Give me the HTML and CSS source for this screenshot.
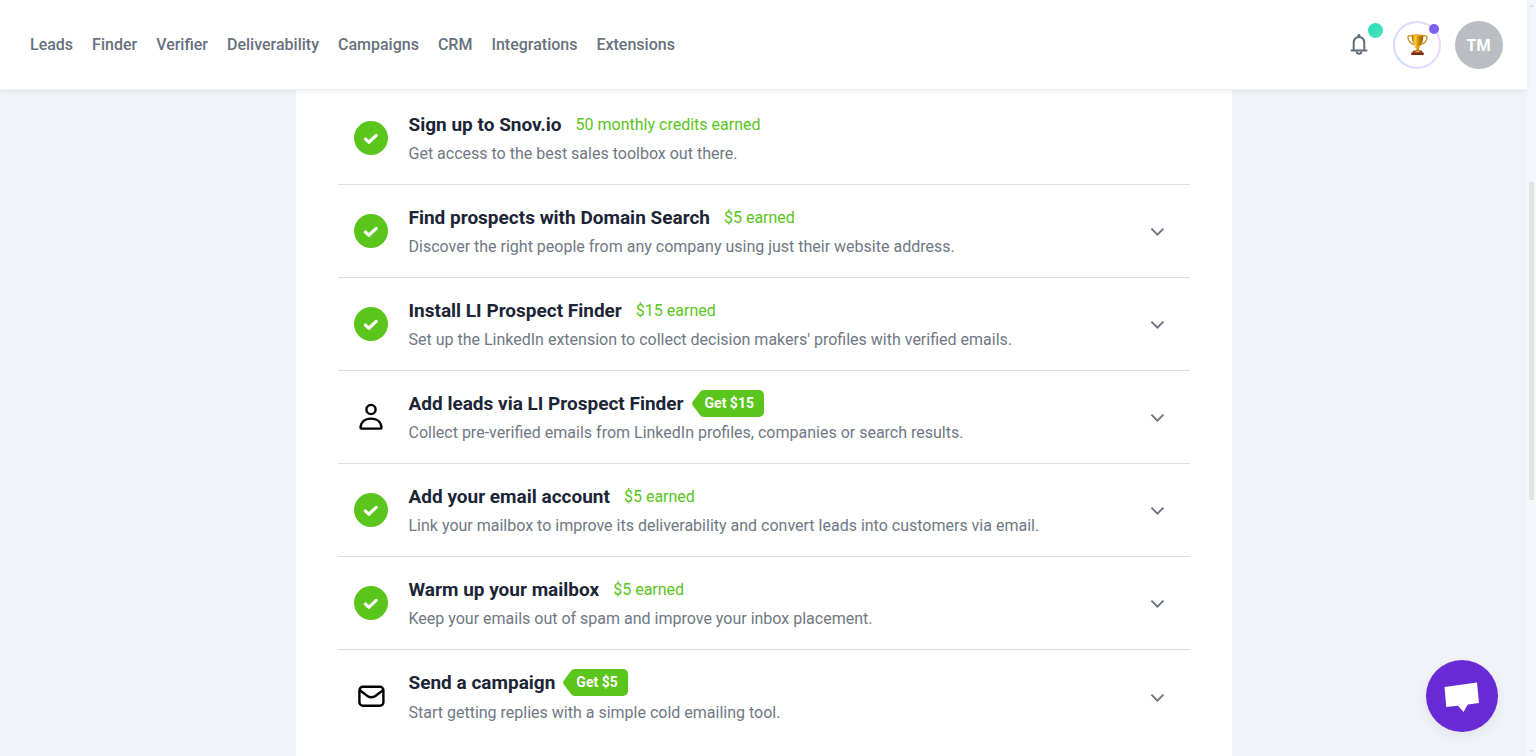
FILE: index.html
```html
<!DOCTYPE html>
<html lang="en">
<head>
  <meta charset="UTF-8" />
  <meta name="viewport" content="width=device-width, initial-scale=1.0"/>
  <title>Snov.io</title>
  <link rel="stylesheet" href="styles.css">
</head>
<body>

  <svg class="sprite" aria-hidden="true">
    <symbol id="done" viewBox="0 0 34 34">
      <circle cx="17" cy="17" r="17" fill="#5ac51a"/>
      <path d="M11.400 18l3.400 3.200 7.400-6.800" fill="none" stroke="#fff" stroke-width="3.200" stroke-linecap="round" stroke-linejoin="round"/>
    </symbol>
    <symbol id="chevron" viewBox="0 0 24 24">
      <path d="M6.400 9.600l6 6 6-6" fill="none" stroke="#6a7481" stroke-width="1.900"/>
    </symbol>
  </svg>

  <div class="page">
    <header class="header">
      <nav class="nav">
        <a href="#">Leads</a>
        <a href="#">Finder</a>
        <a href="#">Verifier</a>
        <a href="#">Deliverability</a>
        <a href="#">Campaigns</a>
        <a href="#">CRM</a>
        <a href="#">Integrations</a>
        <a href="#">Extensions</a>
      </nav>
      <div class="tools">
        <button class="bell" aria-label="Notifications">
          <svg width="20" height="24" viewBox="0 1 20 24" fill="none" stroke="#5f6b78" stroke-width="2">
            <path d="M2.500 18.600h15" stroke-linecap="round"/>
            <path d="M4.700 18V10.300a5.300 5.300 0 0 1 10.600 0V18"/>
            <path d="M10 3.300v1.500" stroke-width="2.800" stroke-linecap="round"/>
            <path d="M7.700 19.500a2.300 2.300 0 0 0 4.600 0"/>
          </svg>
          <span class="bell-dot"></span>
        </button>
        <button class="trophy" aria-label="Rewards">
          <svg width="23" height="23" viewBox="0 0 24 24">
            <defs>
              <linearGradient id="gold" x1="0" x2="1">
                <stop offset="0" stop-color="#a96b00"/>
                <stop offset=".3" stop-color="#ffd23c"/>
                <stop offset=".6" stop-color="#c98b04"/>
                <stop offset="1" stop-color="#9b5c00"/>
              </linearGradient>
            </defs>
            <path d="M7 3.200C3.600 2 1.700 3 2 5c.4 3.300 3.200 6.200 7.300 7.300M17 3.200c3.400-1.200 5.300-.2 5 1.800-.4 3.300-3.200 6.200-7.300 7.300" fill="none" stroke="#c98a12" stroke-width="1.400"/>
            <path d="M6 2h12c.3 5-1 9.500-4.200 12l-.5 1.500.6 3.500h-3.800l.6-3.500-.5-1.500C7 11.500 5.700 7 6 2z" fill="url(#gold)"/>
            <ellipse cx="12" cy="2.200" rx="6" ry="1" fill="#e9ac20"/>
            <path d="M9.300 14h5.400v1.300H9.300z" fill="#e8a81b"/>
            <path d="M7.500 18.300h9l1 2.200h-11z" fill="#9b3b1b"/>
            <path d="M10 18.800h4v1.300h-4z" fill="#f0b62c"/>
            <path d="M5.500 20.300h13v2.700h-13z" fill="#7b2a16"/>
          </svg>
          <span class="trophy-dot"></span>
        </button>
        <button class="avatar">TM</button>
      </div>
    </header>

    <main class="card">
      <ul class="steps">
        <li class="step">
          <svg class="step-icon"><use href="#done"/></svg>
          <div class="step-text">
            <div class="step-head"><h2>Sign up to Snov.io</h2><span class="earned">50 monthly credits earned</span></div>
            <p>Get access to the best sales toolbox out there.</p>
          </div>
        </li>
        <li class="step">
          <svg class="step-icon"><use href="#done"/></svg>
          <div class="step-text">
            <div class="step-head"><h2>Find prospects with Domain Search</h2><span class="earned">$5 earned</span></div>
            <p>Discover the right people from any company using just their website address.</p>
          </div>
          <button class="toggle" aria-label="Expand"><svg><use href="#chevron"/></svg></button>
        </li>
        <li class="step">
          <svg class="step-icon"><use href="#done"/></svg>
          <div class="step-text">
            <div class="step-head"><h2>Install LI Prospect Finder</h2><span class="earned">$15 earned</span></div>
            <p>Set up the LinkedIn extension to collect decision makers' profiles with verified emails.</p>
          </div>
          <button class="toggle" aria-label="Expand"><svg><use href="#chevron"/></svg></button>
        </li>
        <li class="step">
          <svg class="step-icon" viewBox="0 0 34 34" fill="none" stroke="#000" stroke-width="2.400" stroke-linejoin="round">
            <circle cx="17" cy="9.500" r="4.600"/>
            <path d="M7.500 28.600c-.6 0-1-.4-1-1C6.800 22.200 10.700 18.600 17 18.600s10.200 3.600 10.500 9c0 .6-.4 1-1 1z"/>
          </svg>
          <div class="step-text">
            <div class="step-head"><h2>Add leads via LI Prospect Finder</h2><span class="reward"><svg width="13" height="27" viewBox="0 0 13 27"><path d="M13 0h-1C10 0 9 .7 8 2L.8 11.500q-1.400 2 0 4L8 25c1 1.300 2 2 4 2h1z" fill="#5ac51a"/></svg><b>Get $15</b></span></div>
            <p>Collect pre-verified emails from LinkedIn profiles, companies or search results.</p>
          </div>
          <button class="toggle" aria-label="Expand"><svg><use href="#chevron"/></svg></button>
        </li>
        <li class="step">
          <svg class="step-icon"><use href="#done"/></svg>
          <div class="step-text">
            <div class="step-head"><h2>Add your email account</h2><span class="earned">$5 earned</span></div>
            <p>Link your mailbox to improve its deliverability and convert leads into customers via email.</p>
          </div>
          <button class="toggle" aria-label="Expand"><svg><use href="#chevron"/></svg></button>
        </li>
        <li class="step">
          <svg class="step-icon"><use href="#done"/></svg>
          <div class="step-text">
            <div class="step-head"><h2>Warm up your mailbox</h2><span class="earned">$5 earned</span></div>
            <p>Keep your emails out of spam and improve your inbox placement.</p>
          </div>
          <button class="toggle" aria-label="Expand"><svg><use href="#chevron"/></svg></button>
        </li>
        <li class="step">
          <svg class="step-icon" viewBox="0 0 34 34" fill="none" stroke="#000" stroke-width="2.400">
            <rect x="5.400" y="6.800" width="24" height="19" rx="3.500"/>
            <path d="M5.800 10.200l7.600 5.800q4 2.600 8 0L29 10.200"/>
          </svg>
          <div class="step-text">
            <div class="step-head"><h2>Send a campaign</h2><span class="reward"><svg width="13" height="27" viewBox="0 0 13 27"><path d="M13 0h-1C10 0 9 .7 8 2L.8 11.500q-1.400 2 0 4L8 25c1 1.300 2 2 4 2h1z" fill="#5ac51a"/></svg><b>Get $5</b></span></div>
            <p>Start getting replies with a simple cold emailing tool.</p>
          </div>
          <button class="toggle" aria-label="Expand"><svg><use href="#chevron"/></svg></button>
        </li>
      </ul>
    </main>
  </div>

  <div class="scrollbar" aria-hidden="true">
    <svg width="9" height="10" viewBox="0 0 9 10"><path d="M2 7l2.500-3L7 7z" fill="#dcdde2"/></svg>
    <div class="track"><div class="thumb"></div></div>
    <svg width="9" height="10" viewBox="0 0 9 10"><path d="M2 4l2.500 3L7 4z" fill="#dcdde2"/></svg>
  </div>

  <button class="chat" aria-label="Open chat">
    <svg width="72" height="72" viewBox="0 0 72 72"><path d="M18.500 27L51 22.500 53 43 41.800 44.500 37.500 52 32 45.800 20.300 47z" fill="#fff"/></svg>
  </button>

</body>
</html>
```
FILE: styles.css
```css
:root {
  --green: #5ac51a;
  --text-color: #1c2536;
  --secondary-text-color: #6f7883;
  --background-color: #f0f4f9;
}

* {
  box-sizing: border-box;
  margin: 0;
  padding: 0;
}

body {
  display: flex;
  height: 100vh;
  overflow: hidden;
  background-color: var(--background-color);
  color: var(--text-color);
  font-family: Roboto, sans-serif;
}

button {
  border: none;
  background: none;
  font-family: inherit;
  cursor: pointer;
}

.sprite {
  display: none;
}

.page {
  flex: 1;
  display: flex;
  flex-direction: column;
}

.header {
  display: flex;
  justify-content: space-between;
  align-items: center;
  flex-shrink: 0;
  position: relative;
  z-index: 1;
  height: 90px;
  padding: 0 24px 0 30px;
  background-color: #fff;
  border-bottom: 1px solid #f0f0f1;
  box-shadow: 0 2px 6px rgba(0, 0, 0, 0.06);
}

.nav {
  display: flex;
  gap: 19px;
}

.nav a {
  color: #67717d;
  font-size: 16px;
  font-weight: 500;
  line-height: 24px;
  text-decoration: none;
}

.tools {
  display: flex;
  align-items: center;
}

.bell, .trophy {
  position: relative;
  display: flex;
  justify-content: center;
  align-items: center;
}

.bell {
  width: 20px;
  margin-right: 24px;
}

.bell-dot {
  position: absolute;
  top: -10px;
  left: 19px;
  width: 15px;
  height: 15px;
  border-radius: 50%;
  background: linear-gradient(135deg, #22dbb5, #50e2bd);
}

.trophy {
  width: 48px;
  height: 48px;
  margin-right: 14px;
  border: 2px solid transparent;
  border-radius: 50%;
  background: linear-gradient(#fff, #fff) padding-box, linear-gradient(90deg, #cfdfff, #f2d5fb) border-box;
}

.trophy-dot {
  position: absolute;
  top: 1px;
  right: 0;
  width: 10px;
  height: 10px;
  border-radius: 50%;
  background-color: #7b61ee;
}

.avatar {
  width: 48px;
  height: 48px;
  border-radius: 50%;
  background-color: #babdc2;
  color: #fff;
  font-family: "Open Sans", sans-serif;
  font-size: 16px;
  font-weight: 700;
}

.card {
  flex: 1;
  width: 100%;
  max-width: 936px;
  margin: 0 auto;
  padding: 2px 42px 0;
  background-color: #fff;
}

.steps {
  list-style: none;
}

.step {
  display: flex;
  align-items: center;
  height: 93px;
  padding: 0 21px 0 16px;
  border-bottom: 1px solid #dcdde0;
}

.step:last-child {
  border-bottom: none;
}

.step-icon {
  flex-shrink: 0;
  width: 34px;
  height: 34px;
  margin-right: 21px;
}

.step-text {
  flex: 1;
}

.step-head {
  display: flex;
  align-items: center;
  height: 28px;
  margin-bottom: 4px;
}

.step-head h2 {
  font-size: 19px;
  font-weight: 700;
}

.earned {
  margin-left: 14px;
  color: var(--green);
  font-size: 16px;
}

.reward {
  display: flex;
  margin-left: 8px;
}

.reward b {
  height: 27px;
  padding-right: 10px;
  border-radius: 0 5px 5px 0;
  background-color: var(--green);
  color: #fff;
  font-size: 14px;
  font-weight: 700;
  line-height: 27px;
}

.step-text p {
  color: var(--secondary-text-color);
  font-size: 16px;
  line-height: 24px;
}

.toggle, .toggle svg {
  display: block;
  width: 24px;
  height: 24px;
}

.scrollbar {
  display: flex;
  flex-direction: column;
  width: 9px;
  background-color: #f6f7fe;
}

.track {
  flex: 1;
  display: grid;
  grid-template-rows: 172fr 318fr 246fr;
}

.thumb {
  grid-row: 2;
  margin: 0 2px;
  background-color: #e3e3e4;
}

.chat {
  position: fixed;
  right: 38px;
  bottom: 24px;
  z-index: 2;
  width: 72px;
  height: 72px;
  border-radius: 50%;
  background-color: #682ad5;
  box-shadow: 0 4px 12px rgba(30, 40, 80, 0.08);
}
```
